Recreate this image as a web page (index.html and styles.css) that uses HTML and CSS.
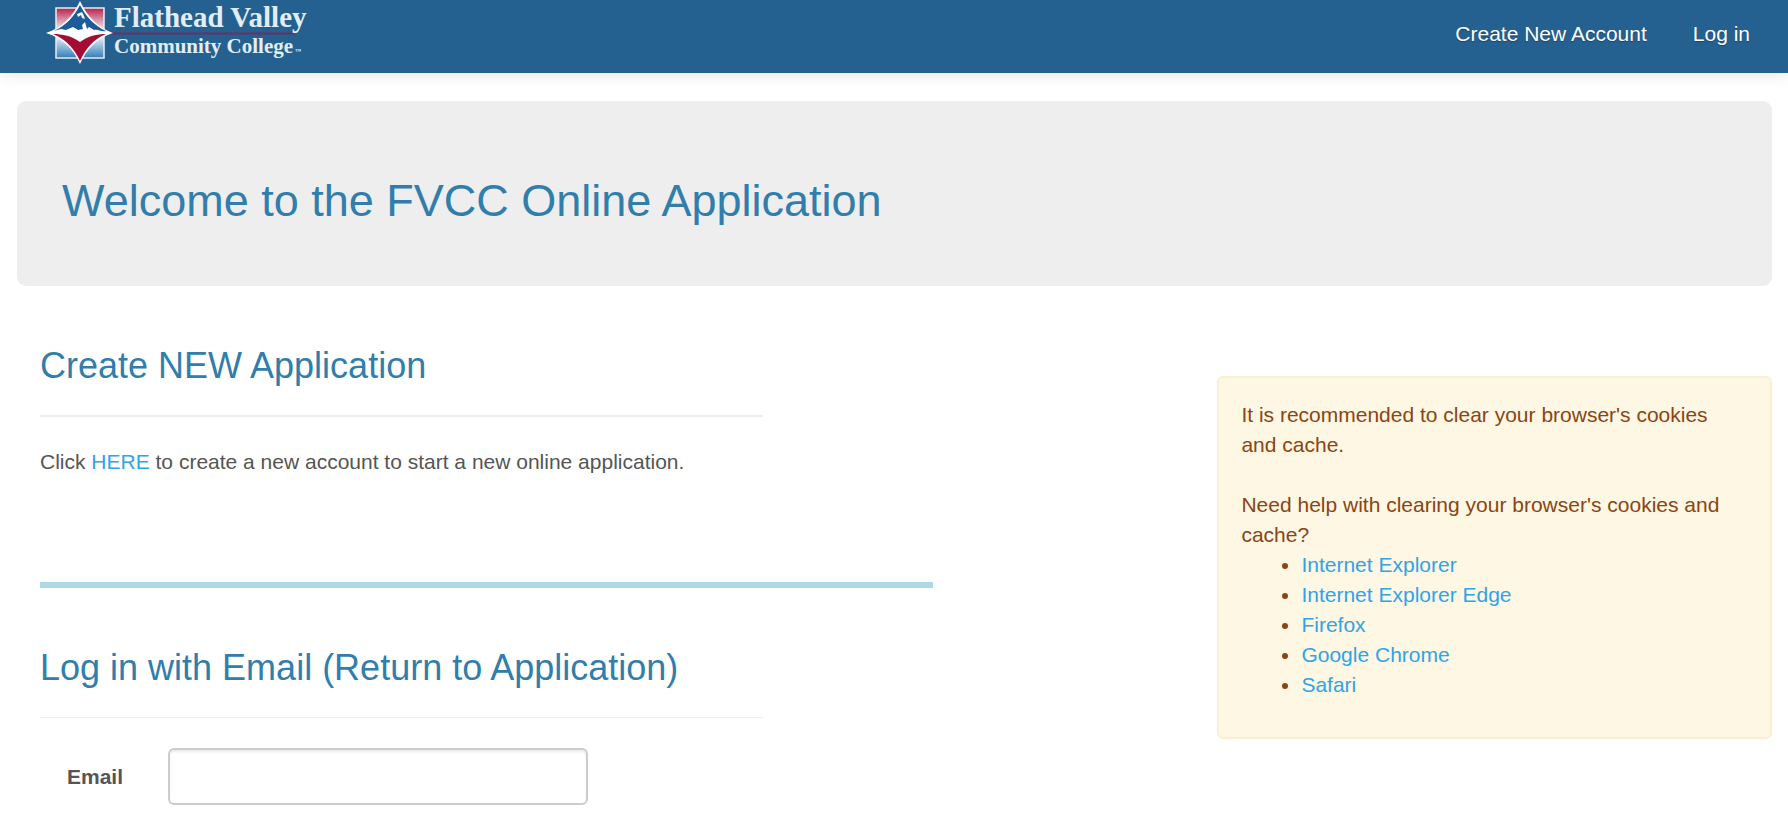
FILE: index.html
```html
<!DOCTYPE html>
<html lang="en">
<head>
<meta charset="utf-8">
<title>FVCC Online Application</title>
<link rel="stylesheet" href="styles.css">
</head>
<body>
<header class="navbar">
  <a class="brand" href="#" aria-label="Flathead Valley Community College">
    <svg class="brand-logo" width="270" height="72" viewBox="0 0 270 72" role="img" aria-hidden="true">
      <defs>
        <linearGradient id="square" x1="0" y1="0" x2="0" y2="1">
          <stop offset="0" stop-color="#b8204a"/>
          <stop offset="0.22" stop-color="#d58ba2"/>
          <stop offset="0.46" stop-color="#f6f4f8"/>
          <stop offset="0.62" stop-color="#d3e4f2"/>
          <stop offset="1" stop-color="#2f7db8"/>
        </linearGradient>
      </defs>
      <path d="M65 33.500H251" stroke="#6b3065" stroke-width="2"/>
      <rect x="12" y="8" width="48" height="50" fill="url(#square)" stroke="#e6edf5" stroke-width="1.500"/>
      <path d="M36 1C43 16 54 28 69 33C54 38 43 48 36 64C29 48 18 38 2 33C18 28 29 16 36 1Z" fill="#fff"/>
      <path d="M36 5C42 17 51 26 62 31C57 32 54 29 50 30L45 27L43 29L41 22L38 25L39 29L34 30L29 27L22 30L17 29L10 31C21 26 30 17 36 5Z" fill="#1d5c9a"/>
      <path d="M33 14L38 12L40 16L41 19L38 18L37 15L34 17Z" fill="#f3f7fb"/>
      <path d="M9 34C18 34 28 36 36 42C44 36 53 34 62 34C50 39 42 48 36 61C30 48 21 39 9 34Z" fill="#a30d33"/>
      <text class="logo-title" x="70" y="27">Flathead Valley</text>
      <text class="logo-subtitle" x="70" y="53">Community College</text>
      <text class="logo-mark" x="251" y="53">™</text>
    </svg>
  </a>
  <nav class="nav-links">
    <a href="#">Create New Account</a>
    <a href="#">Log in</a>
  </nav>
</header>
<main class="page">
  <section class="jumbotron">
    <h1>Welcome to the FVCC Online Application</h1>
  </section>
  <div class="columns">
    <div class="content">
      <section>
        <h2>Create NEW Application</h2>
        <hr class="rule rule-thick">
        <p>Click <a href="#">HERE</a> to create a new account to start a new online application.</p>
      </section>
      <hr class="divider">
      <section>
        <h2>Log in with Email (Return to Application)</h2>
        <hr class="rule">
        <form class="login-form">
          <label for="email">Email</label>
          <input id="email" type="email" name="email">
        </form>
      </section>
    </div>
    <aside class="notice">
      <p>It is recommended to clear your browser's cookies and cache.</p>
      <p class="notice-help">Need help with clearing your browser's cookies and cache?</p>
      <ul>
        <li><a href="#">Internet Explorer</a></li>
        <li><a href="#">Internet Explorer Edge</a></li>
        <li><a href="#">Firefox</a></li>
        <li><a href="#">Google Chrome</a></li>
        <li><a href="#">Safari</a></li>
      </ul>
    </aside>
  </div>
</main>
</body>
</html>
```

FILE: styles.css
```css
* {
  box-sizing: border-box;
}

body {
  margin: 0;
  background: #fff;
  color: #555;
  font-family: "Liberation Sans", Arial, sans-serif;
  font-size: 21px;
  line-height: 30px;
}

a {
  color: #2fa4e7;
  text-decoration: none;
}

h1,
h2,
p {
  margin: 0;
}

h1,
h2 {
  color: #317eac;
  font-weight: 400;
}

h1 {
  font-size: 45px;
  line-height: 50px;
}

h2 {
  font-size: 36px;
  line-height: 40px;
}

.navbar {
  display: flex;
  align-items: flex-start;
  justify-content: space-between;
  min-height: 73px;
  padding: 0 38px 0 44px;
  background: #246190;
  box-shadow: 0 2px 15px rgba(0, 0, 0, 0.1);
}

.brand,
.brand-logo {
  display: block;
}

.logo-title,
.logo-subtitle,
.logo-mark {
  fill: #e2edf6;
  font-family: "Liberation Serif", "Times New Roman", serif;
  font-weight: 700;
}

.logo-title {
  font-size: 29px;
}

.logo-subtitle {
  font-size: 21px;
}

.logo-mark {
  font-size: 6px;
}

.nav-links {
  display: flex;
  gap: 46px;
  padding-top: 19px;
}

.nav-links a {
  color: #fff;
  text-shadow: 0 1px 1px rgba(0, 0, 0, 0.3);
}

.page {
  padding: 28px 16px 9px 17px;
}

.jumbotron {
  padding: 75px 46px 60px 45px;
  border-radius: 9px;
  background: #eee;
}

.columns {
  display: flex;
  align-items: flex-start;
  justify-content: space-between;
}

.content {
  width: 52.2%;
  padding: 60px 0 0 23px;
}

.rule {
  width: 81%;
  height: 1px;
  margin: 29px 0 30px;
  border: 0;
  background: #eee;
}

.rule-thick {
  height: 2px;
}

.divider {
  height: 6px;
  margin: 105px 0 60px;
  border: 0;
  background: #add8e6;
}

.login-form {
  display: flex;
  align-items: center;
  gap: 45px;
}

.login-form label {
  width: 83px;
  font-weight: 700;
  text-align: right;
}

.login-form input {
  width: 47%;
  height: 57px;
  padding: 12px 18px;
  border: 2px solid #ccc;
  border-radius: 6px;
  background: #fff;
  box-shadow: inset 0 2px 2px rgba(0, 0, 0, 0.08);
  color: #555;
  font: inherit;
}

.notice {
  width: 31.6%;
  margin-top: 90px;
  padding: 22px;
  border: 2px solid #fbeed5;
  border-radius: 6px;
  background: #fdf7e3;
  color: #8b4513;
}

.notice-help {
  margin-top: 30px;
}

.notice ul {
  margin: 0 0 15px;
  padding-left: 60px;
}
```
